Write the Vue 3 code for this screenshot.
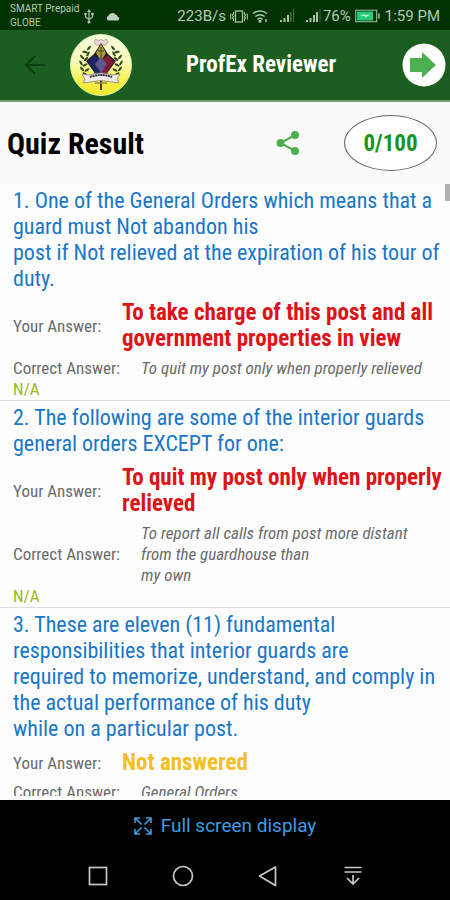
<script setup>
const questions = [
  {
    text: '1. One of the General Orders which means that a\nguard must Not abandon his\npost if Not relieved at the expiration of his tour of\nduty.',
    answer: 'To take charge of this post and all\ngovernment properties in view',
    state: 'wrong',
    correct: 'To quit my post only when properly relieved',
    note: 'N/A',
  },
  {
    text: '2. The following are some of the interior guards\ngeneral orders EXCEPT for one:',
    answer: 'To quit my post only when properly\nrelieved',
    state: 'wrong',
    correct: 'To report all calls from post more distant\nfrom the guardhouse than\nmy own',
    note: 'N/A',
  },
  {
    text: '3. These are eleven (11) fundamental\nresponsibilities that interior guards are\nrequired to memorize, understand, and comply in\nthe actual performance of his duty\nwhile on a particular post.',
    answer: 'Not answered',
    state: 'skipped',
    correct: 'General Orders',
    note: 'N/A',
  },
]
// Left half of the laurel wreath: x, y, rotation. The right half mirrors it.
const leaves = [
  [19, 14, -50], [15, 18, 10], [18, 20, -60], [12, 23, 50], [16, 25, -40],
  [11, 29, 60], [15, 31, -30], [12, 35, 50], [17, 36, -30], [15, 40, 30],
]
</script>

<template>
  <div class="screen">
    <div class="status">
      <div class="carrier">SMART Prepaid<br />GLOBE</div>
      <svg class="usb" viewBox="0 0 10 15" width="10" height="15">
        <path d="M5 2v11M1.500 5v3L5 10.500 8.500 8V5" fill="none" stroke="#a9c4a9" stroke-width="1.200" />
        <path d="M5 0l2 3H3z" fill="#a9c4a9" />
        <circle cx="1.500" cy="5" r="1.300" fill="#a9c4a9" />
        <path d="M7.300 3.800h2.400v2.400H7.300z" fill="#a9c4a9" />
        <circle cx="5" cy="13" r="1.600" fill="#a9c4a9" />
      </svg>
      <svg class="cloud" viewBox="0 0 14 9" width="14" height="9">
        <path d="M2.500 8.500a2.300 2.300 0 0 1-.2-4.400A4.200 4.200 0 0 1 9.500 2.500a3 3 0 0 1 2.200 2.200 2 2 0 0 1 .3 3.800z" fill="#c0d0c0" />
      </svg>
      <span class="speed">223B/s</span>
      <svg class="vibrate" viewBox="0 0 18 13" width="18" height="13" fill="none" stroke="#a9c4a9">
        <rect x="5.500" y="1" width="7" height="11" stroke-width="1.300" />
        <path d="M3.500 2v2l-1 1 1 1.500-1 1.500 1 1v2M.7 3.500v6M14.500 2v2l1 1-1 1.500 1 1.500-1 1v2M17.300 3.500v6" stroke-width="1.100" />
      </svg>
      <svg class="wifi" viewBox="0 0 17 14" width="17" height="14" fill="none" stroke="#a9c4a9" stroke-width="1.500">
        <path d="M1 4.500a11 11 0 0 1 14 0M3.300 7.500a7.500 7.500 0 0 1 9.400 0M5.500 10.300a4 4 0 0 1 5 0" />
        <circle cx="8" cy="12.300" r=".8" fill="#a9c4a9" />
        <path d="M14 10v3" />
      </svg>
      <svg class="signal" viewBox="0 0 15 14" width="15" height="14">
        <path d="M0 11h2v2H0zM3.500 9h2v4h-2zM7 6h2v7H7z" fill="#a9c4a9" />
        <path d="M10 3h1.500v10H10zM13 0h1v13h-1z" fill="#3d703d" />
      </svg>
      <svg class="signal second" viewBox="0 0 15 14" width="15" height="14">
        <path d="M0 11h2v2H0zM3.500 9h2v4h-2zM7 6h2v7H7zM10 3h2v10h-2z" fill="#a9c4a9" />
        <path d="M13.500 0h1v13h-1z" fill="#3d703d" />
      </svg>
      <span>76%</span>
      <svg class="battery" viewBox="0 0 26 14" width="26" height="14">
        <rect x=".7" y="1.200" width="21" height="11.500" fill="none" stroke="#a9c4a9" />
        <rect x="2" y="2.500" width="16" height="9" fill="#27cb78" />
        <path d="M5 7l5-2v1.200l5-.7-4.500 3V7.300z" fill="#d8f8e4" />
        <path d="M24 4.500v5" stroke="#a9c4a9" stroke-width="1.500" />
      </svg>
      <span>1:59 PM</span>
    </div>

    <header class="bar">
      <button class="plain back" aria-label="Back">
        <svg viewBox="0 0 20 20" width="20" height="20" fill="none" stroke="#0b3f10" stroke-width="2">
          <path d="M19.500 10H1.500M10 1L1 10l9 9" />
        </svg>
      </button>
      <svg class="logo" viewBox="0 0 62 62" width="62" height="62">
        <defs>
          <linearGradient id="gold" x1="0" y1="0" x2="0" y2="1">
            <stop offset="0" stop-color="#f4fbe0" />
            <stop offset=".45" stop-color="#fafab8" />
            <stop offset=".75" stop-color="#f5f04a" />
            <stop offset="1" stop-color="#efea2a" />
          </linearGradient>
        </defs>
        <circle cx="31" cy="31" r="30.500" fill="url(#gold)" stroke="#d9ecb0" />
        <g fill="#31501f">
          <ellipse v-for="(l, i) in leaves" :key="'l' + i" :cx="l[0]" :cy="l[1]" rx="2.800" ry="1.200" :transform="`rotate(${l[2]} ${l[0]} ${l[1]})`" />
          <ellipse v-for="(l, i) in leaves" :key="'r' + i" :cx="62 - l[0]" :cy="l[1]" rx="2.800" ry="1.200" :transform="`rotate(${-l[2]} ${62 - l[0]} ${l[1]})`" />
        </g>
        <path d="M24 8l2-3 3 2 2-2 2 2 3-2 2 3-2 3H26z" fill="#e6d6da" stroke="#a58f96" stroke-width=".7" />
        <path d="M31 9l7 11 8 7-8 11-2 4H26l-2-4-8-11 8-7z" fill="#1d1c26" />
        <path d="M31 10l5 9-5 8-5-8z" fill="#a99a35" />
        <path d="M31 13v11M28 17h6" stroke="#4b4320" />
        <path d="M24 21l7 5v14h-5l-8-12z" fill="#1d2663" />
        <path d="M38 21l-7 5v14h5l8-12z" fill="#7c1c35" />
        <path d="M31 23l6 7-6 9-6-9z" fill="#5d568f" />
        <path d="M31 40v16" stroke="#4a3c1c" stroke-width="2" />
        <path d="M12 40l7 1q12-4 24 0l7-1-3 5 2 4-7-1q-11-3-22 0l-7 1 2-4z" fill="#f0ebe8" stroke="#85807a" stroke-width=".8" />
        <path d="M20 43q11-4 22 0" fill="none" stroke="#34303a" stroke-width="2" stroke-dasharray="2 .6" />
        <path d="M25 49h12" stroke="#8e8551" stroke-width="1.500" />
      </svg>
      <h1>ProfEx Reviewer</h1>
      <button class="plain next" aria-label="Next">
        <svg viewBox="0 0 44 44" width="44" height="44">
          <circle cx="22" cy="22" r="21.500" fill="#fff" />
          <path d="M8 15h12V9l14 13-14 13v-6H8z" fill="#4caf50" />
        </svg>
      </button>
    </header>

    <section class="title">
      <h2>Quiz Result</h2>
      <button class="plain share" aria-label="Share">
        <svg viewBox="0 0 24 24" width="24" height="24">
          <path d="M19 4L4.500 12 19 20" fill="none" stroke="#4caf50" stroke-width="2" />
          <g fill="#4caf50"><circle cx="19" cy="4" r="4" /><circle cx="4.500" cy="12" r="4" /><circle cx="19" cy="20" r="4" /></g>
        </svg>
      </button>
      <div class="score">0/100</div>
    </section>

    <main class="results">
      <article v-for="q in questions" :key="q.text" class="item">
        <p class="question">{{ q.text }}</p>
        <div class="row your">
          <span class="label">Your Answer:</span>
          <strong :class="q.state">{{ q.answer }}</strong>
        </div>
        <div class="row right">
          <span class="label">Correct Answer:</span>
          <em>{{ q.correct }}</em>
        </div>
        <p class="note">{{ q.note }}</p>
      </article>
      <div class="thumb"></div>
    </main>

    <footer>
      <button class="plain full">
        <svg viewBox="0 0 18 18" width="18" height="18" fill="none" stroke="#3d9be0" stroke-width="1.600">
          <path d="M1 6V1h5M12 1h5v5M17 12v5h-5M6 17H1v-5M1 1l6.500 6.500M17 1l-6.500 6.500M17 17l-6.500-6.500M1 17l6.500-6.500" />
        </svg>
        Full screen display
      </button>
      <nav>
        <button class="plain" aria-label="Recent apps">
          <svg viewBox="0 0 22 22" width="22" height="22"><rect x="2.500" y="2.500" width="17" height="17" fill="none" stroke="#c8c8c8" stroke-width="1.700" /></svg>
        </button>
        <button class="plain" aria-label="Home">
          <svg viewBox="0 0 22 22" width="22" height="22"><circle cx="11" cy="11" r="9.500" fill="none" stroke="#c8c8c8" stroke-width="1.700" /></svg>
        </button>
        <button class="plain" aria-label="Back">
          <svg viewBox="0 0 22 22" width="22" height="22"><path d="M18.500 2v18.500L2.500 11z" fill="none" stroke="#c8c8c8" stroke-width="1.700" stroke-linejoin="round" /></svg>
        </button>
        <button class="plain" aria-label="Hide navigation">
          <svg viewBox="0 0 22 22" width="22" height="22" fill="none" stroke="#c8c8c8" stroke-width="1.700"><path d="M2.500 2.500h17M2.500 7h17M11 10v9M5 13l6 6 6-6" /></svg>
        </button>
      </nav>
    </footer>
  </div>
</template>

<style>
body {
  margin: 0;
}
</style>

<style scoped>
.screen {
  display: flex;
  flex-direction: column;
  height: 100vh;
  overflow: hidden;
  background: #fdfdfd;
  font-family: "Roboto Condensed", "Liberation Sans Narrow", Roboto, sans-serif;
}
h1, h2, p {
  margin: 0;
}
.plain {
  display: flex;
  align-items: center;
  justify-content: center;
  padding: 0;
  border: 0;
  background: none;
  font: inherit;
}
svg {
  display: block;
  flex: none;
}
.status {
  display: flex;
  align-items: center;
  flex: none;
  box-sizing: border-box;
  height: 30px;
  padding: 2px 10px 0;
  background: #003300;
  color: #b4cbb4;
  font: 15px/16px Roboto, sans-serif;
  white-space: nowrap;
}
.carrier {
  font-size: 10px;
  line-height: 14px;
}
.usb {
  margin-left: 5px;
}
.cloud {
  margin-left: 12px;
}
.speed {
  margin-left: auto;
}
.vibrate {
  margin-left: 4px;
}
.wifi {
  margin-left: 4px;
}
.signal {
  margin-left: 11px;
}
.second {
  margin-right: 2px;
}
.battery {
  margin: 0 4px;
}
.bar {
  display: flex;
  align-items: center;
  flex: none;
  height: 70px;
  padding: 0 4px 0 25px;
  border-bottom: 2px solid #73a175;
  background: #1b5e20;
}
.logo {
  margin-left: 25px;
}
h1 {
  flex: 1;
  margin-left: 54px;
  color: #fff;
  font-size: 23px;
  line-height: 28px;
}
.title {
  display: flex;
  align-items: center;
  flex: none;
  height: 82px;
  padding: 0 13px 0 7px;
  background: #fafafa;
}
h2 {
  flex: 1;
  padding-top: 2px;
  font-size: 30px;
  line-height: 34px;
}
.share {
  margin-right: 44px;
}
.score {
  display: flex;
  align-items: center;
  justify-content: center;
  box-sizing: border-box;
  width: 93px;
  height: 56px;
  border: 1px solid #666;
  border-radius: 50%;
  background: #fff;
  color: #1b941f;
  font-size: 23px;
  font-weight: 700;
}
.results {
  position: relative;
  flex: 1;
  min-height: 0;
  margin-bottom: 4px;
  overflow: hidden;
}
.thumb {
  position: absolute;
  top: 0;
  right: 0;
  width: 5px;
  height: 17px;
  background: #b0b0b0;
}
.item {
  padding: 4px 0 0 13px;
  border-bottom: 1px solid #dcdcdc;
  white-space: pre;
}
.question {
  color: #1976c8;
  font-size: 22px;
  line-height: 26px;
}
.row {
  display: flex;
  align-items: center;
}
.your {
  margin-top: 8px;
}
.right {
  margin-top: 6px;
}
.label {
  flex: none;
  width: 109px;
  color: #6b6b6b;
  font-size: 17px;
  line-height: 21px;
}
.right .label {
  width: 128px;
}
strong {
  font-size: 23px;
  line-height: 26px;
}
.wrong {
  color: #dd1317;
}
.skipped {
  color: #f2bf26;
}
em {
  color: #6b6b6b;
  font-size: 17px;
  line-height: 21px;
}
.note {
  color: #9db82c;
  font-size: 17px;
  line-height: 21px;
}
footer {
  flex: none;
  background: #000;
}
.full {
  gap: 9px;
  width: 100%;
  height: 51px;
  color: #3d9be0;
  font: 19px/22px Roboto, sans-serif;
}
nav {
  display: flex;
  justify-content: center;
  gap: 63px;
  height: 49px;
}
</style>
